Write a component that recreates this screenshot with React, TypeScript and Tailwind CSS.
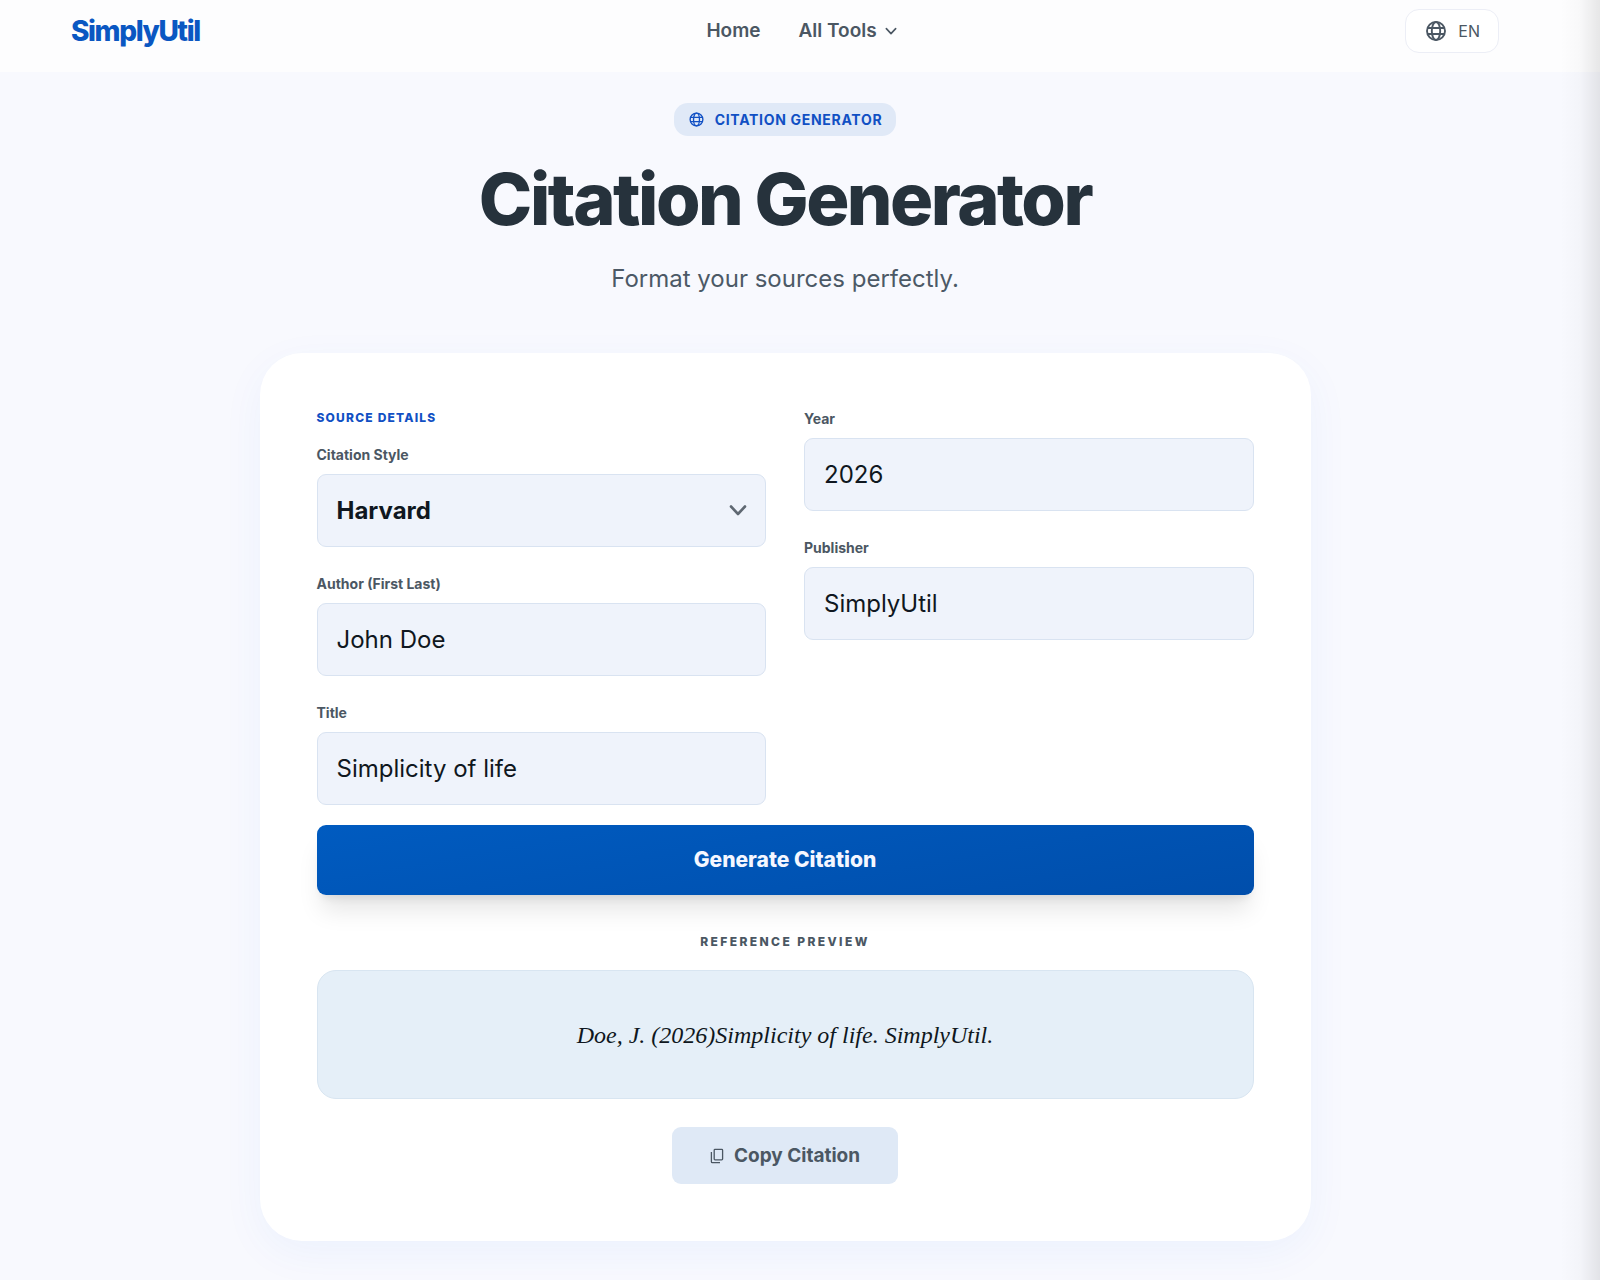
import { useState } from 'react';
import type { ReactNode } from 'react';

interface FieldProps {
  id: string;
  label: string;
  children: ReactNode;
}

interface Source {
  author: string;
  title: string;
  year: string;
  publisher: string;
}

const inputClass =
  'block w-full h-[73px] rounded-[9px] border border-[#d9e3f1] bg-[#eff3fb] px-[19px] text-2xl text-[#0f1720] outline-none focus:border-[#0058c0]';

const GlobeIcon = ({ className }: { className: string }) => (
  <svg
    viewBox="0 0 24 24"
    fill="none"
    stroke="currentColor"
    strokeWidth="1.9"
    className={className}
    aria-hidden="true"
  >
    <circle cx="12" cy="12" r="9" />
    <ellipse cx="12" cy="12" rx="4.2" ry="9" />
    <path d="M3.6 9h16.8M3.6 15h16.8" />
  </svg>
);

const ChevronDown = ({ className }: { className: string }) => (
  <svg
    viewBox="0 0 24 24"
    fill="none"
    stroke="currentColor"
    strokeLinecap="round"
    strokeLinejoin="round"
    className={className}
    aria-hidden="true"
  >
    <path d="M5 8.5 12 16l7-7.5" />
  </svg>
);

const CopyIcon = () => (
  <svg
    viewBox="0 0 14 16"
    fill="none"
    stroke="currentColor"
    strokeWidth="1.3"
    className="w-[14px] h-4"
    aria-hidden="true"
  >
    <rect x="4.2" y="1.4" width="8.4" height="10.4" rx="0.8" />
    <path d="M1.4 4v9.700c0 .5.4.9.9.9h7.700" />
  </svg>
);

const Field = ({ id, label, children }: FieldProps) => (
  <div>
    <label htmlFor={id} className="block mb-[10px] text-sm leading-[18px] font-bold text-[#4b5763]">
      {label}
    </label>
    {children}
  </div>
);

const formatHarvard = ({ author, title, year, publisher }: Source) => {
  const names = author.trim().split(' ');
  const last = names[names.length - 1];
  const initial = names.length > 1 ? `, ${names[0].charAt(0)}.` : '';
  return `${last}${initial} (${year})${title}. ${publisher}.`;
};

const Header = () => (
  <header className="h-18 bg-[#fdfdfe] pl-[71px] pr-[101px] pt-[9px]">
    <div className="flex items-center justify-between h-11">
      <a href="#" className="text-[28px] leading-8 font-extrabold tracking-tighter text-[#0a57c2]">
        SimplyUtil
      </a>
      <nav className="flex items-center gap-[38px] text-[19px] leading-6 font-semibold text-[#4b5763]">
        <a href="#">Home</a>
        <button type="button" className="flex items-center gap-[6px]">
          All Tools
          <ChevronDown className="w-4 h-4 stroke-[2.4]" />
        </button>
      </nav>
      <button
        type="button"
        className="flex items-center gap-[10px] h-11 px-[18px] rounded-[14px] border border-[#eceef6] bg-white text-base text-[#4b5763]"
      >
        <GlobeIcon className="w-6 h-6" />
        EN
      </button>
    </div>
  </header>
);

const App = () => {
  const [style, setStyle] = useState('Harvard');
  const [source, setSource] = useState<Source>({
    author: 'John Doe',
    title: 'Simplicity of life',
    year: '2026',
    publisher: 'SimplyUtil',
  });
  const [citation, setCitation] = useState(formatHarvard(source));

  const update = (key: keyof Source, value: string) => setSource({ ...source, [key]: value });

  return (
    <div className="relative min-h-screen bg-[#f8f9fe] font-['Inter',sans-serif] text-[#0f1720]">
      <Header />

      <main className="flex flex-col items-center pr-[30px] pt-[31px] pb-10">
        {/* Hero */}
        <div className="flex items-center gap-[10px] h-[33px] px-[14px] rounded-[14px] bg-[#e0e9f7] text-sm font-bold tracking-wider text-[#1150c4]">
          <GlobeIcon className="w-[17px] h-[17px]" />
          CITATION GENERATOR
        </div>
        <h1 className="mt-[23px] text-7xl leading-[80px] font-extrabold tracking-[-2.5px] text-[#26323c]">
          Citation Generator
        </h1>
        <p className="mt-6 text-2xl leading-8 text-[#4c5966]">Format your sources perfectly.</p>

        {/* Form card */}
        <section className="w-full max-w-[1051px] mt-[58px] rounded-[42px] bg-white p-[57px] shadow-[0_12px_44px_rgba(0,90,240,0.05)]">
          <form
            onSubmit={(e) => {
              e.preventDefault();
              setCitation(formatHarvard(source));
            }}
          >
            <div className="grid grid-cols-2 items-start gap-[38px]">
              <div className="flex flex-col gap-7">
                <div>
                  <h2 className="mb-5 text-xs leading-4 font-extrabold tracking-widest text-[#1150c4]">
                    SOURCE DETAILS
                  </h2>
                  <Field id="style" label="Citation Style">
                    <div className="relative">
                      <select
                        id="style"
                        value={style}
                        onChange={(e) => setStyle(e.target.value)}
                        className={`${inputClass} appearance-none font-bold`}
                      >
                        <option>Harvard</option>
                      </select>
                      <ChevronDown className="absolute right-4 top-6 w-6 h-6 stroke-[2.6] text-[#5f6872] pointer-events-none" />
                    </div>
                  </Field>
                </div>
                <Field id="author" label="Author (First Last)">
                  <input
                    id="author"
                    value={source.author}
                    onChange={(e) => update('author', e.target.value)}
                    className={inputClass}
                  />
                </Field>
                <Field id="title" label="Title">
                  <input
                    id="title"
                    value={source.title}
                    onChange={(e) => update('title', e.target.value)}
                    className={inputClass}
                  />
                </Field>
              </div>

              <div className="flex flex-col gap-7">
                <Field id="year" label="Year">
                  <input
                    id="year"
                    value={source.year}
                    onChange={(e) => update('year', e.target.value)}
                    className={inputClass}
                  />
                </Field>
                <Field id="publisher" label="Publisher">
                  <input
                    id="publisher"
                    value={source.publisher}
                    onChange={(e) => update('publisher', e.target.value)}
                    className={inputClass}
                  />
                </Field>
              </div>
            </div>

            <button
              type="submit"
              className="w-full h-[70px] mt-5 rounded-[9px] bg-linear-170 from-[#005bc0] to-[#004eab] text-[21px] font-extrabold text-[#f5f7ff] shadow-[0_20px_25px_-5px_rgba(0,0,0,0.1),0_8px_10px_-6px_rgba(0,0,0,0.1)]"
            >
              Generate Citation
            </button>
          </form>

          {/* Preview */}
          <div className="flex flex-col items-center">
            <h2 className="mt-[37px] text-xs leading-5 font-extrabold tracking-[2.4px] text-[#4b5763]">
              REFERENCE PREVIEW
            </h2>
            <div className="flex items-center justify-center w-full h-[129px] mt-[18px] rounded-[19px] border border-[#d8e5f1] bg-[#e5eff8]">
              <p className="font-['Liberation_Serif',serif] italic text-2xl leading-9 text-[#0f1720]">{citation}</p>
            </div>
            <button
              type="button"
              onClick={() => navigator.clipboard.writeText(citation)}
              className="flex items-center gap-[10px] h-[57px] mt-7 px-[38px] rounded-[9px] bg-[#dfe9f6] text-[19px] leading-6 font-bold text-[#4b5763]"
            >
              <CopyIcon />
              Copy Citation
            </button>
          </div>
        </section>
      </main>

      {/* Shade along the right edge */}
      <div className="absolute inset-y-0 right-0 w-10 bg-linear-to-r from-transparent via-black/2 to-black/9 pointer-events-none"></div>
    </div>
  );
};

export default App;
